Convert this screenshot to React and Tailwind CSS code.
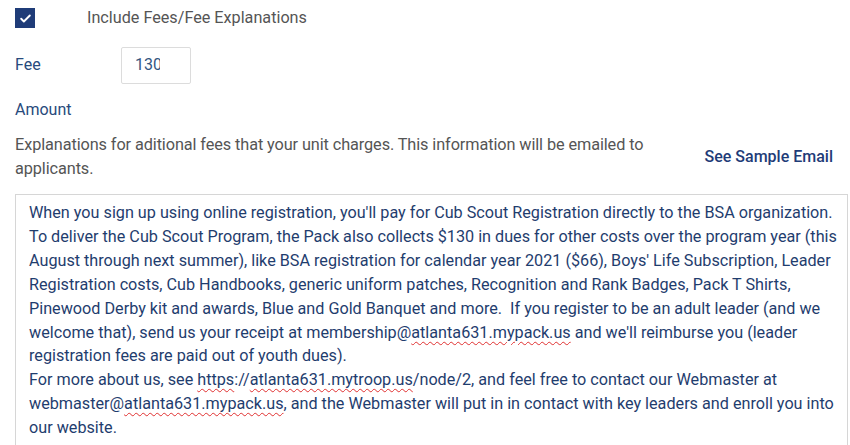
import React from 'react';

const Sp = ({ children }) => (
    <span className="underline decoration-wavy decoration-[#e03030] decoration-1 underline-offset-[3px]">{children}</span>
);

export default function App() {
    const lines = [
        <>When you sign up using online registration, you'll pay for Cub Scout Registration directly to the BSA organization.</>,
        <>To deliver the Cub Scout Program, the Pack also collects $130 in dues for other costs over the program year (this</>,
        <>August through next summer), like BSA registration for calendar year 2021 ($66), Boys' Life Subscription, Leader</>,
        <>Registration costs, Cub Handbooks, generic uniform patches, Recognition and Rank Badges, Pack T Shirts,</>,
        <>Pinewood Derby kit and awards, Blue and Gold Banquet and more.&nbsp; If you register to be an adult leader (and we</>,
        <>welcome that), send us your receipt at membership@<Sp>atlanta631.mypack.us</Sp> and we'll reimburse you (leader</>,
        <>registration fees are paid out of youth dues).</>,
        <>For more about us, see <Sp>https</Sp>://<Sp>atlanta631.mytroop.us</Sp>/node/2, and feel free to contact our Webmaster at</>,
        <>webmaster@<Sp>atlanta631.mypack.us</Sp>, and the Webmaster will put in in contact with key leaders and enroll you into</>,
        <>our website.</>,
    ];

    return (
        <div className="w-[850px] h-[445px] overflow-hidden bg-white font-['Roboto',sans-serif]">
            <div className="flex items-center h-[36px] pl-[15px]">
                <div className="w-[20px] h-[20px] bg-[#1f3c78] flex items-center justify-center">
                    <svg width="13" height="13" viewBox="0 0 24 24" fill="none" stroke="white" strokeWidth="3.5" strokeLinecap="round" strokeLinejoin="round">
                        <path d="M4 12.5l5 5L20 6.5" />
                    </svg>
                </div>
                <span className="ml-[52px] text-[16.2px] text-[#555]">Include Fees/Fee Explanations</span>
            </div>
            <div className="flex items-center h-[56px] pl-[15px] mt-[1px]">
                <span className="w-[106px] text-[16px] text-[#284a7c]">Fee</span>
                <div className="w-[70px] h-[37px] border border-[#dcdcdc] rounded-[2px] flex items-center pl-[13px]">
                    <div className="w-[25px] overflow-hidden whitespace-nowrap text-[16px] text-[#33557f]">130</div>
                </div>
            </div>
            <div className="pl-[15px] h-[34px] flex items-center text-[16px] text-[#284a7c]">Amount</div>
            <div className="flex items-start pl-[15px] pr-[17px] mt-[6px]">
                <p className="w-[660px] text-[16.3px] leading-[24px] text-[#555] tracking-[-0.1px]">
                    Explanations for aditional fees that your unit charges. This information will be emailed to<br />applicants.
                </p>
                <a className="ml-auto mt-[12px] text-[16px] font-medium text-[#1f3c78] whitespace-nowrap">See Sample Email</a>
            </div>
            <div className="ml-[15px] mr-[2px] mt-[13px] border border-[#d6d6d6] border-b-0 pt-[6px] pl-[13px] h-[300px]">
                {lines.map((l, i) => (
                    <div key={i} className="whitespace-nowrap text-[16.2px] leading-[23.9px] text-[#1f3d6e]">{l}</div>
                ))}
            </div>
        </div>
    );
}
